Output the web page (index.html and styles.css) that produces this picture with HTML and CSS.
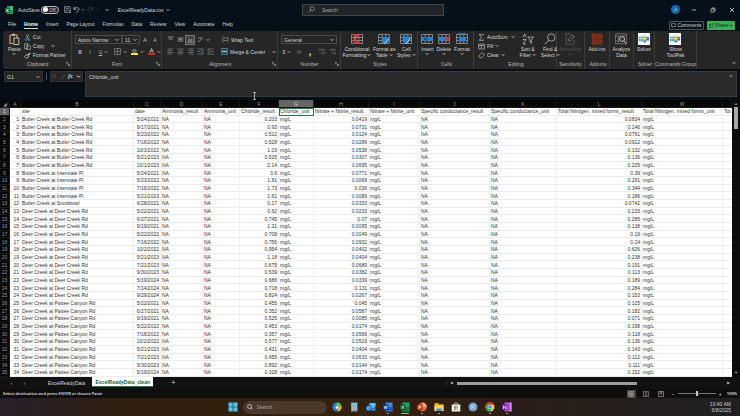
FILE: index.html
```html
<!DOCTYPE html>
<html lang="en">
<head>
<meta charset="utf-8">
<title>ExcelReadyData.csv</title>
<link rel="stylesheet" href="styles.css">
</head>
<body>
<svg class="defs" aria-hidden="true">
  <symbol id="chev" viewBox="0 0 4 4"><path d="M.6 1.2 2 2.6 3.4 1.2" fill="none" stroke="currentColor" stroke-width=".8"/></symbol>
  <symbol id="launch" viewBox="0 0 5 5"><path d="M.5 3V.5H3M2 2l2.3 2.3M4.4 2.2v2.2H2.2" fill="none" stroke="currentColor" stroke-width=".7"/></symbol>
  <symbol id="grid" viewBox="0 0 12 12"><path d="M.5 1.5h11v9H.5zM.5 4.5h11M.5 7.5h11M4.2 1.5v9M7.8 1.5v9" fill="none" stroke="#9a9a9a" stroke-width=".8"/></symbol>
  <symbol id="solver" viewBox="0 0 13 13"><path fill="#f4f8fa" d="M0 0h13v13H0z"/><path fill="#2a9fd0" d="M1 4h5v5H1zM8 4h4v2H8z"/><path fill="#e9c33b" d="M5 3h3l1 3-2 2H5z"/><path fill="#2f6c8f" d="M6 8h3v2H6zM9 6h3v2H9z"/><path stroke="#fff" stroke-width=".6" d="M1 6h5M3 4v5"/></symbol>
</svg>

<header class="titlebar">
  <svg class="logo" viewBox="0 0 8 8"><path fill="#1f9a5c" d="M2 0h6v8H2z"/><path fill="#36c481" d="M5 0h3v4H5z"/><path fill="#0e6b3a" d="M0 2h5v5H0z"/><path stroke="#fff" stroke-width=".8" d="m1.4 3 2.2 3M3.6 3 1.4 6"/></svg>
  <label class="autosave">AutoSave <span class="toggle"><input type="checkbox" aria-label="AutoSave"><span>Off</span></span></label>
  <button class="tool" aria-label="Save"><svg viewBox="0 0 8 8"><path d="M.6.6h5.8l1 1v5.8H.6zM2 .6v2.2h3.6V.6M2 7.4V4.6h4v2.8" fill="none" stroke="#999" stroke-width=".8"/></svg></button>
  <button class="tool undo" aria-label="Undo"><svg viewBox="0 0 8 8"><path d="M1 .8v3h3M1.2 3.6C3 1 6.8 1.2 6.8 4 6.8 5.600 5 6.500 3.600 7.600" fill="none" stroke="#bbb" stroke-width=".9"/></svg><svg class="chev"><use href="#chev"/></svg></button>
  <button class="tool redo" aria-label="Redo"><svg viewBox="0 0 8 8"><path d="M7 .8v3H4M6.800 3.600C5 1 1.200 1.200 1.200 4 1.200 5.600 3 6.500 4.400 7.600" fill="none" stroke="#444" stroke-width=".9"/></svg><svg class="chev"><use href="#chev"/></svg></button>
  <button class="more" aria-label="Customize toolbar"><svg class="chev"><use href="#chev"/></svg></button>
  <button class="filename">ExcelReadyData.csv <svg class="chev"><use href="#chev"/></svg></button>
  <label class="search"><svg viewBox="0 0 7 7"><path d="M.6 6.400 2.800 4.200" stroke="#aaa" stroke-width=".7"/><circle cx="4.300" cy="2.700" r="2" fill="none" stroke="#aaa" stroke-width=".7"/></svg><input type="search" placeholder="Search" aria-label="Search"></label>
  <button class="avatar" aria-label="Account">JL</button>
  <div class="window">
    <button aria-label="Minimize"><svg viewBox="0 0 6 6"><path d="M1 3h4" stroke="#ccc" stroke-width=".8"/></svg></button>
    <button aria-label="Restore"><svg viewBox="0 0 6 6"><path d="M1 2h3v3H1zM2 2V1h3v3H4" fill="none" stroke="#ccc" stroke-width=".7"/></svg></button>
    <button aria-label="Close"><svg viewBox="0 0 6 6"><path d="m1 1 4 4M5 1 1 5" stroke="#ddd" stroke-width=".8"/></svg></button>
  </div>
</header>

<nav class="menu">
  <a href="#">File</a><a href="#" class="current">Home</a><a href="#">Insert</a><a href="#">Page Layout</a><a href="#">Formulas</a><a href="#">Data</a><a href="#">Review</a><a href="#">View</a><a href="#">Automate</a><a href="#">Help</a>
  <button class="comments"><svg viewBox="0 0 6 6"><path d="M.5.8h5v3.400H3L1.600 5.400V4.200H.5z" fill="none" stroke="#ddd" stroke-width=".6"/></svg>Comments</button>
  <button class="share"><svg viewBox="0 0 6 6"><path d="M2.500 1.500H.6v4h4V4M2 4c0-2 1-2.500 3-2.500M4 .4l1.300 1.100L4 2.600" fill="none" stroke="#073317" stroke-width=".6"/></svg>Share<svg class="chev"><use href="#chev"/></svg></button>
</nav>

<section class="ribbon">
  <div class="group g-clip">
    <div class="body">
      <button class="big paste"><svg viewBox="0 0 12 12"><path d="M2 2h7v3M2 2v8.500h3" fill="none" stroke="#d6a33c" stroke-width="1.200"/><path d="M4 .8h3v2H4z" fill="#bbb"/><path d="M5.800 5h5v6.500h-5z" fill="#2b2b2b" stroke="#ddd" stroke-width=".8"/></svg>Paste<svg class="chev"><use href="#chev"/></svg></button>
      <div class="stack">
        <button><svg viewBox="0 0 7 7"><path d="M2 .4 4.500 5M5 .4 2.500 5" stroke="#ccc" stroke-width=".6"/><circle cx="2" cy="5.700" r=".9" fill="none" stroke="#3b8ed8" stroke-width=".7"/><circle cx="5" cy="5.700" r=".9" fill="none" stroke="#3b8ed8" stroke-width=".7"/></svg>Cut</button>
        <button class="copy"><svg viewBox="0 0 7 7"><path d="M.6.6h3v5h-3zM2.800 2h2.400l1.200 1.200v3.400H2.800z" fill="#262626" stroke="#ccc" stroke-width=".6"/></svg>Copy<svg class="chev"><use href="#chev"/></svg></button>
        <button><svg viewBox="0 0 7 7"><path d="m3.600 2.600 2.400-2 .6.8-2 2.200z" fill="#ccc"/><path d="M2.800 2.400 5 4.500 2.600 6.500.6 4.500z" fill="none" stroke="#ddd" stroke-width=".8"/></svg>Format Painter</button>
      </div>
    </div>
    <div class="name">Clipboard<svg><use href="#launch"/></svg></div>
  </div>

  <div class="group g-font">
    <div class="body rows">
      <div class="line">
        <span class="combo face"><select aria-label="Font"><option>Aptos Narrow</option></select><svg class="chev"><use href="#chev"/></svg></span><span class="combo size"><select aria-label="Font size"><option>11</option></select><svg class="chev"><use href="#chev"/></svg></span>
        <button class="cell up" aria-label="Grow font">A</button><button class="cell" aria-label="Shrink font">A</button>
      </div>
      <div class="line">
        <button class="cell"><b>B</b></button><button class="cell"><i>I</i></button><button class="cell pair"><u>U</u><svg class="chev"><use href="#chev"/></svg></button>
        <button class="cell pair" aria-label="Borders"><svg viewBox="0 0 7 7"><path d="M.5.5h6v6h-6zM3.500.5v6M.5 3.500h6" fill="none" stroke="#888" stroke-width=".7"/></svg><svg class="chev"><use href="#chev"/></svg></button>
        <button class="cell pair" aria-label="Fill color"><svg viewBox="0 0 7 7"><path d="M1.500 3 3.500 1l2 2-2 1.500z" fill="none" stroke="#ddd" stroke-width=".7"/><path fill="#f3ee1c" d="M0 5h7v2H0z"/></svg><svg class="chev"><use href="#chev"/></svg></button>
        <button class="cell pair" aria-label="Font color"><svg viewBox="0 0 7 7"><path d="m1.800 4.500 1.700-4 1.700 4M2.500 3.200h2" fill="none" stroke="#ddd" stroke-width=".7"/><path fill="#e0221f" d="M0 5h7v2H0z"/></svg><svg class="chev"><use href="#chev"/></svg></button>
      </div>
    </div>
    <div class="name">Font<svg><use href="#launch"/></svg></div>
  </div>

  <div class="group g-align">
    <div class="body rows">
      <div class="line">
        <button class="cell" aria-label="Top align"><svg viewBox="0 0 7 7"><path d="M.5 1h6M1.500 3h4" stroke="#aaa" stroke-width=".8"/></svg></button><button class="cell" aria-label="Middle align"><svg viewBox="0 0 7 7"><path d="M.5 2h6M1.500 3.500h4M.5 5h6" stroke="#aaa" stroke-width=".8"/></svg></button><button class="cell on" aria-label="Bottom align"><svg viewBox="0 0 7 7"><path d="M1.500 4h4M.5 6h6" stroke="#bbb" stroke-width=".8"/></svg></button>
        <button class="cell pair" aria-label="Orientation"><svg viewBox="0 0 7 7"><path d="m1 6 5-4M1 3l2-2 1 2" fill="none" stroke="#999" stroke-width=".8"/></svg><svg class="chev"><use href="#chev"/></svg></button>
        <button class="wide"><svg viewBox="0 0 7 7"><path d="M1 .5v6M6 .5v6M2 2h3M2 4.500h3" fill="none" stroke="#999" stroke-width=".7"/></svg>Wrap Text</button>
      </div>
      <div class="line">
        <button class="cell" aria-label="Align left"><svg viewBox="0 0 7 7"><path d="M.5 1h6M.5 2.700h4M.5 4.400h6M.5 6.100h4" stroke="#888" stroke-width=".7"/></svg></button><button class="cell" aria-label="Center"><svg viewBox="0 0 7 7"><path d="M.5 1h6M1.500 2.700h4M.5 4.400h6M1.500 6.100h4" stroke="#888" stroke-width=".7"/></svg></button><button class="cell" aria-label="Align right"><svg viewBox="0 0 7 7"><path d="M.5 1h6M2.500 2.700h4M.5 4.400h6M2.500 6.100h4" stroke="#888" stroke-width=".7"/></svg></button>
        <button class="cell" aria-label="Decrease indent"><svg viewBox="0 0 7 7"><path d="M.5 1h6M4 2.700h2.500M4 4.400h2.500M.5 6.100h6" stroke="#888" stroke-width=".7"/><path d="M3 3.500H.6" stroke="#3b8ed8" stroke-width=".8"/></svg></button><button class="cell" aria-label="Increase indent"><svg viewBox="0 0 7 7"><path d="M.5 1h6M.5 2.700H3M.5 4.400H3M.5 6.100h6" stroke="#888" stroke-width=".7"/><path d="M4 3.500h2.400" stroke="#3b8ed8" stroke-width=".8"/></svg></button>
        <button class="wide merge"><svg viewBox="0 0 7 7"><path d="M.5.5h6v6h-6z" fill="none" stroke="#999" stroke-width=".6"/><path d="M.5 2h6v3h-6z" fill="#2b75ad"/><path d="M1.500 3.500h4" stroke="#bfe0ff" stroke-width=".6"/></svg>Merge &amp; Center<svg class="chev"><use href="#chev"/></svg></button>
      </div>
    </div>
    <div class="name">Alignment<svg><use href="#launch"/></svg></div>
  </div>

  <div class="group g-num">
    <div class="body rows">
      <div class="line"><span class="combo"><select aria-label="Number format"><option>General</option></select><svg class="chev"><use href="#chev"/></svg></span></div>
      <div class="line spread">
        <button class="cell pair">$<svg class="chev"><use href="#chev"/></svg></button><button class="cell dim">%</button><button class="cell comma"><b>,</b></button><button class="cell" aria-label="Increase decimal"><svg viewBox="0 0 7 7"><path d="M6 .8v2M4 .8v2M6 4.200v2M4 4.200v2M.6 1.800h2" stroke="#888" stroke-width=".8"/></svg></button><button class="cell" aria-label="Decrease decimal"><svg viewBox="0 0 7 7"><path d="M6 .8v2M4 .8v2M2 .8v2M6 4.200v2M4 4.200v2" stroke="#888" stroke-width=".8"/></svg></button>
      </div>
    </div>
    <div class="name">Number<svg><use href="#launch"/></svg></div>
  </div>

  <div class="group g-styles">
    <div class="body">
      <button class="big"><svg viewBox="0 0 12 12"><use href="#grid"/><path fill="#d93636" d="M2.500 1h5v3h-5zM2.500 5h3v2.500h-3zM2.500 8.500h6V11h-6z"/></svg>Conditional<span>Formatting<svg class="chev"><use href="#chev"/></svg></span></button>
      <button class="big"><svg viewBox="0 0 12 12"><use href="#grid"/><path fill="#2583cf" d="M4 4h7.500v3.500L8 11.500 4 9z"/><path d="m6 11 4.500-5" stroke="#ccc" stroke-width="1"/></svg>Format as<span>Table<svg class="chev"><use href="#chev"/></svg></span></button>
      <button class="big"><svg viewBox="0 0 12 12"><use href="#grid"/><path fill="#2583cf" d="M2.500 3.500H10V7l-3 4.500-4-3z"/><path d="m6 11 4.500-6" stroke="#ccc" stroke-width="1"/></svg>Cell<span>Styles<svg class="chev"><use href="#chev"/></svg></span></button>
    </div>
    <div class="name">Styles</div>
  </div>

  <div class="group g-cells">
    <div class="body">
      <button class="big"><svg viewBox="0 0 12 12"><use href="#grid"/><path fill="#2583cf" d="M1 4h10.500v4H1z"/><path d="M3 6h5M5 4.500 3 6l2 1.500" stroke="#123" stroke-width=".6" fill="none"/></svg>Insert<svg class="chev"><use href="#chev"/></svg></button>
      <button class="big"><svg viewBox="0 0 12 12"><use href="#grid"/><path fill="#2583cf" d="M.5 4h7v4h-7z"/><path d="m7.500 4 4 4M11.500 4l-4 4" stroke="#d93636" stroke-width="1.100"/></svg>Delete<svg class="chev"><use href="#chev"/></svg></button>
      <button class="big"><svg viewBox="0 0 12 12"><use href="#grid"/><path fill="#2583cf" d="M3 4h7v4.500H3z"/><path d="M2 .8h8" stroke="#2583cf" stroke-width="1"/></svg>Format<svg class="chev"><use href="#chev"/></svg></button>
    </div>
    <div class="name">Cells</div>
  </div>

  <div class="group g-edit">
    <div class="body">
      <div class="stack">
        <button class="sum"><svg viewBox="0 0 7 7"><path d="M5.500 1.500V.7H1.200L3.500 3.500 1.200 6.300h4.300v-.8" fill="none" stroke="#ccc" stroke-width=".7"/></svg>AutoSum<svg class="chev"><use href="#chev"/></svg></button>
        <button><svg viewBox="0 0 7 7"><path d="M.6 1h5.800v5H.6zM.6 2.500h5.800M3.500 3v2.500" fill="none" stroke="#bbb" stroke-width=".7"/></svg>Fill<svg class="chev"><use href="#chev"/></svg></button>
        <button><svg viewBox="0 0 7 7"><path d="M3 1.500 4.500.7l2 2L3.500 5.800H2L.7 4z" fill="none" stroke="#bbb" stroke-width=".7"/></svg>Clear<svg class="chev"><use href="#chev"/></svg></button>
      </div>
      <button class="big"><svg viewBox="0 0 12 12"><path d="M1 4.500 2.700.8l1.700 3.700M1 6.500h3L1 11h3M6 4h5.500L9.400 7v3.500L8 9V7z" fill="none" stroke="#bbb" stroke-width=".8"/></svg>Sort &amp;<span>Filter<svg class="chev"><use href="#chev"/></svg></span></button>
      <button class="big"><svg viewBox="0 0 12 12"><circle cx="7.300" cy="4.500" r="3.700" fill="none" stroke="#bbb" stroke-width=".8"/><path d="M4.600 7.200.8 11.300" stroke="#bbb" stroke-width=".9"/></svg>Find &amp;<span>Select<svg class="chev"><use href="#chev"/></svg></span></button>
    </div>
    <div class="name">Editing</div>
  </div>

  <div class="group g-sens"><div class="body"><button class="big off" disabled><svg viewBox="0 0 12 12"><path d="M2 .8h5M2 .8v10.500h8V7" fill="none" stroke="#666" stroke-width=".8"/><path d="m4 7 4-5 2.500 1.500L6 8.500z" fill="none" stroke="#777" stroke-width=".9"/></svg>Sensitivity<svg class="chev"><use href="#chev"/></svg></button></div><div class="name">Sensitivity</div></div>
  <div class="group g-add"><div class="body"><button class="big"><svg viewBox="0 0 12 12"><path fill="#7d2b14" stroke="#a63c1e" stroke-width=".5" d="M1 1h4.500v4.500H1zM6.700 1h4.500v4.500H6.700zM1 6.700h4.500v4.500H1zM6.700 6.700h4.500v4.500H6.700z"/></svg>Add-ins</button></div><div class="name">Add-ins</div></div>
  <div class="group g-ana"><div class="body"><button class="big"><svg viewBox="0 0 12 12"><path d="M.6.8h10.800v10H.6zM.6 3h10.800M.6 8h3M3.500 3v8" fill="none" stroke="#888" stroke-width=".7"/><circle cx="7" cy="6" r="2.500" fill="#333" stroke="#ddd" stroke-width=".8"/><path d="m8.800 7.800 2.700 3" stroke="#ddd" stroke-width=".9"/></svg>Analyze<span>Data</span></button></div><div class="name"></div></div>
  <div class="group g-solv"><div class="body"><button class="big"><svg><use href="#solver"/></svg>Solver</button></div><div class="name">Solver</div></div>
  <div class="group g-cmd"><div class="body"><button class="big"><svg><use href="#solver"/></svg>Show<span>ToolPak</span></button></div><div class="name">Commands Group</div></div>
  <div class="group last"><button aria-label="Ribbon options"><svg class="chev"><use href="#chev"/></svg></button></div>
</section>

<section class="formula">
  <span class="combo ref"><select aria-label="Name box"><option>G1</option></select><svg class="chev"><use href="#chev"/></svg></span>
  <span class="sep"></span>
  <div class="fx"><button aria-label="Cancel"><svg viewBox="0 0 6 6"><path d="m1 1 4 4M5 1 1 5" stroke="#666" stroke-width=".7"/></svg></button><button aria-label="Enter"><svg viewBox="0 0 6 6"><path d="m.6 3.500 1.600 1.600L5.500 1" fill="none" stroke="#666" stroke-width=".7"/></svg></button><button class="fn">fx</button><svg class="chev"><use href="#chev"/></svg></div>
  <div class="entry"><textarea aria-label="Formula bar" spellcheck="false">Chloride_unit</textarea><svg class="chev flip"><use href="#chev"/></svg></div>
  <svg class="ibeam" viewBox="0 0 4 8"><path d="M.5.6h3M2 .6v6.800M.5 7.400h3" stroke="#ccc" stroke-width=".8"/></svg>
</section>

<main class="sheet">
  <div class="viewport"><table id="grid-data"></table></div>
  <div class="vscroll"><span class="arrow">▲</span><span class="thumb"></span><span class="arrow">▼</span></div>
</main>

<footer class="tabs">
  <button class="arrow">‹</button><button class="arrow">›</button>
  <button class="tab">ExcelReadyData</button><button class="tab active">ExcelReadyData_clean</button><button class="plus">+</button>
  <div class="hscroll"><span class="grip">⋮</span><span class="arrow">◀</span><span class="track"><span class="thumb"></span></span><span class="arrow">▶</span></div>
</footer>
<div class="status">
  <span class="message">Select destination and press ENTER or choose Paste</span>
  <button class="view on" aria-label="Normal view"><svg viewBox="0 0 7 7"><path d="M.5.5h6v6h-6zM.5 2.500h6M.5 4.500h6M2.500.5v6M4.500.5v6" fill="none" stroke="#bbb" stroke-width=".6"/></svg></button>
  <button class="view" aria-label="Page layout"><svg viewBox="0 0 7 7"><path d="M.5.5h6v6h-6zM2 2h3M2 3.500h3M2 5h3" fill="none" stroke="#aaa" stroke-width=".7"/></svg></button>
  <button class="view" aria-label="Page break preview"><svg viewBox="0 0 7 7"><path d="M.5.5h6v6h-6zM2.500.5v3h2v-3" fill="none" stroke="#bbb" stroke-width=".7"/></svg></button>
  <div class="zoom"><button>−</button><input type="range" aria-label="Zoom" min="0" max="100" value="50"><button>+</button></div>
  <span class="percent">100%</span>
</div>

<footer class="taskbar">
  <span class="side"></span>
  <div class="apps">
    <button aria-label="Start"><svg viewBox="0 0 10 10"><path fill="#4fc3f0" d="M.5.5h4.200v4.200H.5zM5.300.5h4.200v4.200H5.300zM.5 5.300h4.200v4.200H.5zM5.300 5.300h4.200v4.200H5.300z"/></svg></button>
    <label class="tsearch"><svg viewBox="0 0 7 7"><circle cx="3" cy="3" r="2.300" fill="none" stroke="#eee" stroke-width=".8"/><path d="m4.700 4.700 1.800 1.800" stroke="#eee" stroke-width=".8"/></svg><input type="search" placeholder="Search" aria-label="Search Windows"></label>
    <button aria-label="Edge"><svg viewBox="0 0 10 10"><circle cx="5" cy="5" r="4.600" fill="#2387c9"/><path fill="#5cc35a" d="M5 .4A4.600 4.600 0 0 1 9.600 5L7 6 4.500 3.500z"/><path fill="#eda93c" d="M6 5h3.600A4.600 4.600 0 0 1 6 9.500z"/><circle cx="5" cy="5.500" r="1.400" fill="#f1e7d8"/></svg></button>
    <button aria-label="Calculator"><svg viewBox="0 0 10 10"><path fill="#8a9ba8" d="M2 .5h6.500v9H2z"/><path fill="#7fd2f2" d="M2.800 1.300h5v2h-5z"/><path stroke="#eee" stroke-width="1" stroke-dasharray="1 1" d="M3 5h5M3 7h5"/></svg></button>
    <button aria-label="Outlook"><svg viewBox="0 0 10 10"><path fill="#1e88d8" d="M3 1h6.500v8H3z"/><path fill="#5fc3f4" d="m3 4 3 2.500L9.500 4V1H5z"/><path fill="#0b5aa8" d="M0 3.500h5.500V9H0z"/><circle cx="2.700" cy="6.200" r="1.300" fill="none" stroke="#fff" stroke-width=".8"/></svg></button>
    <button class="run" aria-label="Word"><svg viewBox="0 0 10 10"><path fill="#3f8de0" d="M2.500.5h7v9h-7z"/><path fill="#1f5fbf" d="M2.500 5h7v4.500h-7z"/><path fill="#123f91" d="M0 2.500h5.500v5.500H0z"/><path d="m1 4 .9 2.800L2.700 4l.9 2.800L4.500 4" fill="none" stroke="#fff" stroke-width=".6"/></svg></button>
    <button class="run live" aria-label="Excel"><svg viewBox="0 0 10 10"><path fill="#25a365" d="M2.500.5h7v9h-7z"/><path fill="#127540" d="M2.500 5h7v4.500h-7z"/><path fill="#0b5a30" d="M0 2.500h5.500v5.500H0z"/><path d="m1.500 3.800 2.500 3M4 3.800l-2.500 3" stroke="#fff" stroke-width=".7"/></svg></button>
    <button class="run" aria-label="PowerPoint"><svg viewBox="0 0 10 10"><circle cx="5.500" cy="5" r="4.400" fill="#e8643c"/><path fill="#f6a183" d="M5.500.6A4.400 4.400 0 0 1 9.900 5H5.500z"/><path fill="#b93417" d="M0 2.500h5.500v5.500H0z"/><path d="M2 7V4h1.200a.8.8 0 0 1 0 1.700H2" fill="none" stroke="#fff" stroke-width=".7"/></svg></button>
    <button class="run" aria-label="File Explorer"><svg viewBox="0 0 10 10"><path fill="#e2a91f" d="M.5 1h3.500l1 1.200h4.500V9h-9z"/><path fill="#fbd75e" d="M.5 3.500h9V9h-9z"/><path fill="#3a8ee0" d="M2.500 6.500h5V9h-5z"/></svg></button>
    <button aria-label="Store"><svg viewBox="0 0 10 10"><path d="M3.500 2.500V1h3v1.500" fill="none" stroke="#ddd" stroke-width=".7"/><path fill="#f2f2f2" d="M.7 2.500h8.600v7H.7z"/><path fill="#e5502b" d="M3 4h1.800v1.800H3z"/><path fill="#7dbb2b" d="M5.200 4H7v1.800H5.200z"/><path fill="#2c9fe0" d="M3 6.200h1.800V8H3z"/><path fill="#f3b81f" d="M5.200 6.200H7V8H5.200z"/></svg></button>
    <button aria-label="RStudio"><svg viewBox="0 0 10 10"><circle cx="5" cy="5" r="4.500" fill="#6f9fd0"/><path d="M3.800 7.200V3h1.700a1 1 0 0 1 0 2.200H3.800M5.200 5.200l1.400 2" fill="none" stroke="#dbe9f7" stroke-width=".8"/></svg></button>
    <button class="run" aria-label="Chrome"><svg viewBox="0 0 10 10"><circle cx="5" cy="5" r="4.500" fill="#f7c928"/><path fill="#e0412f" d="M1.100 2.800A4.500 4.500 0 0 1 9 3H5L3 6z"/><path fill="#2fa24c" d="M1.100 2.800A4.500 4.500 0 0 0 5 9.500l2-3.500H3z"/><circle cx="5" cy="5" r="2" fill="#3f7de8" stroke="#fff" stroke-width=".6"/></svg></button>
    <button class="run" aria-label="OneNote"><svg viewBox="0 0 10 10"><path fill="#b452d8" d="M2.500.5h7v9h-7z"/><path fill="#d98bf0" d="M8 .5h1.500v9H8z"/><path fill="#7a1fa5" d="M0 2.500h5.500v5.500H0z"/><path d="M1.500 7V3.800L4 7V3.800" fill="none" stroke="#fff" stroke-width=".7"/></svg></button>
  </div>
  <time class="side clock">10:40 AM<br>5/8/2025</time>
</footer>
<script src="script.js"></script>
</body>
</html>
```
FILE: styles.css
```css
* { box-sizing: border-box; }
html, body { height: 100%; margin: 0; }
body {
  display: flex;
  flex-direction: column;
  overflow: hidden;
  background: #06101a;
  color: #d6d6d6;
  font: 5px/6px "Liberation Sans", Arial, sans-serif;
}
button, input, select, textarea {
  font: inherit;
  color: inherit;
  background: none;
  border: 0;
  padding: 0;
  margin: 0;
  appearance: none;
  outline: 0;
}
button { display: flex; align-items: center; justify-content: center; white-space: nowrap; }
a { color: inherit; text-decoration: none; }
svg { flex: none; width: 7px; height: 7px; }
svg.chev { width: 4px; height: 4px; }
.defs { position: absolute; width: 0; height: 0; }

/* title bar */
.titlebar { display: flex; align-items: center; height: 19px; padding: 0 5px; background: #06101a; }
.logo { width: 8px; height: 8px; margin-right: 5px; }
.autosave { display: flex; align-items: center; gap: 1px; margin-right: 3px; }
.toggle { display: flex; align-items: center; justify-content: space-between; width: 18px; height: 8px; padding: 0 2px 0 1px; border: 1px solid #bbb; border-radius: 4px; background: #222; }
.toggle input { width: 5px; height: 5px; border-radius: 50%; background: #fff; }
.tool { margin-left: 2px; }
.tool.undo, .tool.redo { gap: 1px; color: #888; }
.tool.redo { color: #333; }
.more { margin: 0 9px 0 6px; }
.filename { gap: 2px; }
.search { display: flex; align-items: center; gap: 7px; flex: 0 0 142px; height: 12px; margin-left: auto; padding: 0 5px; background: #20252a; border: 1px solid #414548; }
.search input { flex: 1; min-width: 0; }
input::placeholder { color: #aaa; opacity: 1; }
.avatar { width: 9px; height: 9px; margin-left: 227px; border-radius: 50%; background: #1568a8; font-size: 4px; }
.window { display: flex; gap: 13px; margin-left: 11px; }
.window svg { width: 6px; height: 6px; }

/* menu */
.menu { display: flex; align-items: center; gap: 8px; height: 12px; padding: 0 5px 0 8px; }
.menu a { height: 8px; line-height: 7px; }
.menu .current { border-bottom: 1px solid #ddd; color: #fff; font-weight: bold; }
.comments, .share { height: 9px; border-radius: 1px; gap: 1px; }
.comments { width: 35px; margin-left: auto; border: 1px solid #555; }
.comments svg, .share svg { width: 5px; height: 5px; }
.share { width: 28px; margin-left: -5px; background: #3dad57; color: #0b2b14; }
.share svg.chev { width: 4px; }

/* ribbon */
.ribbon { display: flex; height: 38px; margin-left: 3px; background: #262626; border-radius: 3px 0 0 3px; }
.group { display: flex; flex-direction: column; border-right: 1px solid #3d3d3d; }
.g-clip { width: 69px; }
.g-font { width: 90px; }
.g-align { width: 116px; }
.g-num { width: 63px; }
.g-styles { width: 77px; }
.g-cells { width: 56px; }
.g-edit { width: 83px; }
.g-sens { width: 28px; }
.g-add { width: 25px; }
.g-ana { width: 24px; }
.g-solv { width: 21px; }
.g-cmd { width: 42px; }
.last { flex: 1; border: 0; align-items: flex-end; justify-content: flex-end; padding: 4px; }
.body { display: flex; flex: 1; min-height: 0; justify-content: space-evenly; padding-top: 2px; }
.name { display: flex; flex: none; justify-content: center; align-items: center; height: 9px; padding: 0 0 2px 2px; color: #bbb; white-space: nowrap; }
.name svg { width: 4px; height: 4px; margin: 0 1px 0 auto; }
.name:has(svg)::before { content: ""; margin-right: auto; width: 4px; }
.g-cmd .name, .g-sens .name { padding-left: 0; }
.big { display: flex; flex-direction: column; justify-content: flex-start; }
.big > svg:first-child { width: 12px; height: 12px; margin-bottom: 1px; }
.big span { display: flex; align-items: center; gap: 1px; }
.off { color: #555; }
.stack { display: grid; grid-template-rows: repeat(3, 9px); }
.stack button { justify-content: flex-start; gap: 2px; height: 8px; }
.copy svg.chev { margin-left: 5px; }
.sum svg.chev { margin-left: 1px; }
.g-clip .body { justify-content: flex-start; gap: 3px; padding-left: 5px; }
.g-edit .body { justify-content: flex-start; gap: 5px; padding-left: 4px; }
.body.rows { flex-direction: column; justify-content: flex-start; gap: 1px; padding: 3px 3px 0; }
.line { display: flex; align-items: center; height: 11px; }
.spread { justify-content: space-between; }
.combo { display: flex; align-items: center; flex: 1; height: 9px; padding: 0 2px; background: #262626; border: 1px solid #4a4a4a; }
.combo select { flex: 1; min-width: 0; }
.combo.face { flex: 0 0 47px; }
.combo.size { flex: 0 0 18px; }
.cell { width: 10px; height: 10px; color: #bbb; flex: none; }
.cell.up { font-size: 6px; }
.cell.comma { font-size: 9px; color: #eee; }
.pair { width: 17px; gap: 2px; }
.g-num .pair { width: 12px; }
.dim { color: #888; }
.on { background: #444; outline: 1px solid #777; outline-offset: -1px; }
.wide { gap: 2px; margin-left: 10px; }
.wide.merge { margin-left: 6px; }
.merge svg.chev { margin-left: 5px; }

/* formula bar */
.formula { position: relative; display: flex; align-items: flex-start; height: 31px; padding: 2px 3px 3px 4px; background: #050d17; }
.combo.ref { flex: 0 0 39px; height: 11px; background: #262626; border-color: #333; }
.sep { width: 1px; height: 7px; margin: 2px 3px; background: #555; }
.fx { display: flex; align-items: center; justify-content: space-around; width: 33px; height: 11px; background: #262626; border: 1px solid #333; }
.fx svg { width: 5px; height: 5px; }
.fn { font: italic bold 6px/7px "Liberation Serif", serif; }
.entry { display: flex; flex: 1; height: 26px; margin-left: 2px; padding: 2px 3px; background: #2a2a2a; border: 1px solid #3a3a3a; }
.entry textarea { flex: 1; resize: none; overflow: hidden; }
.flip { transform: rotate(180deg); }
.ibeam { position: absolute; left: 252px; top: 23px; width: 5px; height: 8px; }

/* worksheet */
.sheet { display: flex; flex: 1; min-height: 0; background: #0c0c0c; }
.viewport { flex: 1; min-width: 0; overflow: hidden; }
table { width: 100%; height: 100%; table-layout: fixed; border-collapse: separate; border-spacing: 0; background: #fff; color: #333; }
th, td { padding: 0 2px 0 1px; overflow: hidden; white-space: nowrap; text-align: left; font-weight: normal; line-height: 6px; border-right: 1px solid #f0f0f0; border-bottom: 1px solid #ececec; }
thead th, tbody th { padding: 0; background: #070707; color: #999; text-align: center; border-color: #1a1a1a; }
thead th { height: 8px; }
td:last-child { padding-right: 0; border-right: 0; }
thead .sel, tbody .sel { background: #666; color: #ddd; }
.num { text-align: right; padding-right: 1px; }
.picked { outline: 1px solid #1e7a46; outline-offset: -1px; }
.vscroll { display: flex; flex-direction: column; align-items: center; width: 8px; padding: 1px 0; }
.arrow { color: #aaa; font-size: 4px; }
.vscroll .thumb { width: 4px; height: 22px; margin-bottom: auto; background: #a8a8a8; }

/* sheet tabs */
.tabs { display: flex; align-items: center; height: 12px; background: #111; }
.tabs > .arrow { width: 13px; font-size: 6px; }
.tabs > .arrow:first-child { margin-left: 5px; }
.tab { height: 10px; padding: 0 3px; margin-left: 14px; }
.tab.active { width: 61px; margin-left: 4px; align-self: flex-start; background: #fff; color: #1b5e3a; border-bottom: 1px solid #1e7a46; font-weight: bold; }
.plus { margin-left: 18px; font-size: 7px; }
.hscroll { display: flex; align-items: center; width: 40%; margin-left: auto; padding-right: 8px; }
.hscroll .grip { width: 6px; color: #888; }
.hscroll .arrow { width: 5px; }
.track { flex: 1; margin: 0 2px; }
.hscroll .thumb { display: block; width: 67%; height: 3px; background: #9c9c9c; }

/* status bar */
.status { display: flex; align-items: center; height: 9px; padding: 0 3px; background: #0e0e0e; }
.message, .percent { font-family: "Open Sans", sans-serif; font-size: 4px; font-weight: 600; color: #e6e6e6; }
.message { margin-right: auto; }
.view { width: 9px; height: 8px; margin-right: 6px; }
.view svg { width: 6px; height: 6px; }
.view.on { outline: 0; }
.zoom { display: flex; align-items: center; gap: 3px; }
.zoom input { width: 38px; height: 6px; background: linear-gradient(#777, #777) center / 100% 1px no-repeat; }
.zoom input::-webkit-slider-thumb { appearance: none; width: 2px; height: 5px; background: #ccc; }
.percent { margin-left: 5px; }

/* taskbar */
.taskbar { display: flex; align-items: center; height: 18px; background: linear-gradient(90deg, #28202a, #31200f 18%, #33200f 50%, #2b1e18 70%, #202022); }
.side { flex: 1; }
.clock { padding-right: 9px; text-align: right; color: #ccc; }
.apps { display: flex; align-items: center; gap: 7px; margin-left: 8px; }
.apps svg { width: 10px; height: 10px; }
.apps button { height: 14px; }
.run { border-bottom: 1px solid transparent; border-image: linear-gradient(90deg, transparent 40%, #999 40%, #999 60%, transparent 60%) 1; }
.run.live { border-image: linear-gradient(90deg, transparent 20%, #5fd08a 20%, #5fd08a 80%, transparent 80%) 1; }
.tsearch { display: flex; align-items: center; gap: 4px; width: 84px; height: 13px; margin: 0 -2px; padding: 0 4px; border-radius: 7px; background: #49382b; }
.apps .tsearch svg { width: 6px; height: 6px; }
.tsearch input { flex: 1; min-width: 0; }
```
FILE: script.js
```js
const columns = [
  ["A", 11, ""], ["B", 113, "site"], ["C", 27, "date"], ["D", 42, "Ammonia_result"],
  ["E", 37, "Ammonia_unit"], ["F", 39, "Chloride_result"], ["G", 35, "Chloride_unit"],
  ["H", 55, "Nitrate + Nitrite_result"], ["I", 51, "Nitrate + Nitrite_unit"],
  ["J", 70, "Specific conductance_result"], ["K", 67, "Specific conductance_unit"],
  ["L", 85, "Total Nitrogen, mixed forms_result"], ["M", 81, "Total Nitrogen, mixed forms_unit"],
  ["", 0, "Tot"]
];
const sites = [
  ["Butler Creek at Butler Creek Rd", 7], ["Butler Creek at Interstate Pl", 4],
  ["Butler Creek at Snowbowl", 1], ["Deer Creek at Deer Creek Rd", 12],
  ["Deer Creek at Pattee Canyon Rd", 10]
].flatMap(([name, count]) => Array(count).fill(name));
const dates = "5/24/2021 9/17/2021 5/23/2022 7/16/2022 10/3/2022 5/21/2023 10/1/2023 5/24/2021 5/23/2022 7/16/2022 5/21/2023 6/28/2021 5/22/2021 6/27/2021 9/19/2021 5/22/2022 7/16/2022 10/2/2022 5/21/2023 7/21/2023 9/30/2023 5/19/2024 7/14/2024 9/29/2024 5/22/2021 6/27/2021 9/19/2021 5/22/2022 7/16/2022 10/2/2022 5/21/2023 7/21/2023 9/30/2023 5/19/2024".split(" ");
const chloride = "0.203 0.93 0.512 0.528 1.03 0.525 2.14 3.6 1.81 1.73 1.61 0.17 0.62 0.745 1.31 0.708 0.756 0.954 1.18 0.675 0.539 0.686 0.718 0.824 0.455 0.352 0.525 0.453 0.357 0.577 0.431 0.455 0.892 0.328".split(" ");
const nitrate = "0.0419 0.0731 0.0124 0.0289 0.0538 0.0307 0.0695 0.0771 0.0069 0.036 0.0089 0.0333 0.0233 0.07 0.0095 0.0049 0.0932 0.0402 0.0404 0.0689 0.0382 0.0339 0.131 0.0267 0.045 0.0587 0.0085 0.0174 0.0566 0.0519 0.0404 0.0633 0.0144 0.0174".split(" ");
const nitrogen = "0.0834 0.146 0.0761 0.0912 0.132 0.136 0.225 0.39 0.291 0.344 0.186 0.0742 0.233 0.285 0.138 0.19 0.24 0.626 0.238 0.191 0.113 0.189 0.284 0.153 0.125 0.182 0.071 0.198 0.118 0.136 0.143 0.112 0.111 0.152".split(" ");

const numeric = new Set([0, 2, 5, 7, 11]);
const cols = `<colgroup><col style="width:10px">${columns.map(c => c[1] ? `<col style="width:${c[1]}px">` : "<col>").join("")}</colgroup>`;
const head = `<thead><tr><th>◢</th>${columns.map(c => `<th${c[0] === "G" ? ' class="sel"' : ""}>${c[0]}</th>`).join("")}</tr></thead>`;
const first = `<tr><th class="sel">1</th>${columns.map(c => `<td${c[0] === "G" ? ' class="picked"' : ""}>${c[2]}</td>`).join("")}</tr>`;
const rows = sites.map((site, i) => {
  const cells = [i + 1, site, dates[i], "NA", "NA", chloride[i], "mg/L", nitrate[i], "mg/L", "NA", "NA", nitrogen[i], "mg/L", ""];
  return `<tr><th>${i + 2}</th>${cells.map((v, n) => `<td${numeric.has(n) ? ' class="num"' : ""}>${v}</td>`).join("")}</tr>`;
}).join("");
document.getElementById("grid-data").innerHTML = `${cols}${head}<tbody>${first}${rows}</tbody>`;
```
